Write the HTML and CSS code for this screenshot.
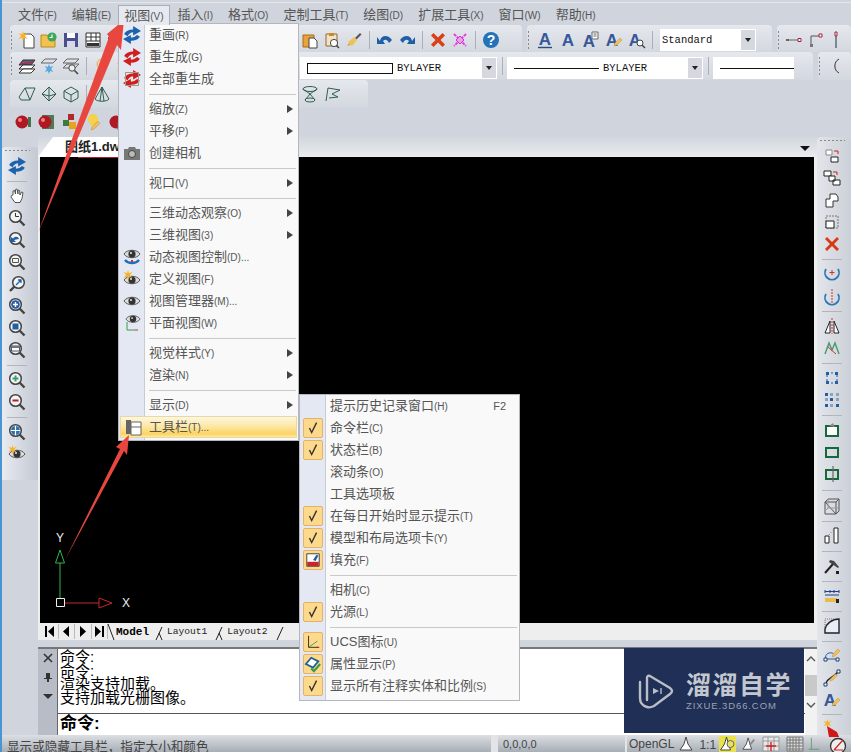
FILE: index.html
```html
<!DOCTYPE html>
<html lang="zh-CN">
<head>
  <meta charset="UTF-8">
  <title>图纸1.dwg</title>
  <link rel="stylesheet" href="styles.css">
</head>
<body>
  <svg class="defs" width="0" height="0">
    <symbol id="regen" viewBox="0 0 16 16">
      <path d="M1 7Q3 3 9 3V0l7 4.500L9 8.500v-3Q6 5.500 4 9Z"/>
      <path d="M15 9.500Q13 13 7 13v3L0 11.500 7 8v2.500q3 0 5.500-2.500Z"/>
    </symbol>
    <symbol id="mag" viewBox="0 0 18 18">
      <line x1="11" y1="11" x2="16.5" y2="16.5" stroke="#444" stroke-width="2.4"/>
      <circle cx="7.5" cy="7.5" r="5.8" fill="#f4f4f4" stroke="#444" stroke-width="1.5"/>
    </symbol>
    <symbol id="eye" viewBox="0 0 18 18">
      <path d="M1 9C4 4 14 4 17 9 14 14 4 14 1 9Z" fill="#ddd" stroke="#555"/>
      <circle cx="9" cy="9" r="3.6" fill="#333"/>
      <circle cx="8" cy="8" r="1" fill="#eee"/>
    </symbol>
    <symbol id="check" viewBox="0 0 18 18">
      <path d="M5 9l2.5 5L13 3" fill="none" stroke="#333" stroke-width="1.6"/>
    </symbol>
    <symbol id="star" viewBox="0 0 10 10">
      <path d="M5 0l1 3.2L9.5 2 7 5l2.5 3L6 6.8 5 10 4 6.8.5 8 3 5 .5 2 4 3.2Z" fill="#f5b32c"/>
    </symbol>
    <symbol id="pencil" viewBox="0 0 10 10">
      <path d="M1 9l1-3 5-5 2 2-5 5Z" fill="#f0c060" stroke="#c89030" stroke-width=".5"/>
    </symbol>
  </svg>

  <div class="app">
    <nav class="menubar">
      <span class="menubar-item">文件<small>(F)</small></span>
      <span class="menubar-item">编辑<small>(E)</small></span>
      <span class="menubar-item open">视图<small>(V)</small></span>
      <span class="menubar-item">插入<small>(I)</small></span>
      <span class="menubar-item">格式<small>(O)</small></span>
      <span class="menubar-item">定制工具<small>(T)</small></span>
      <span class="menubar-item">绘图<small>(D)</small></span>
      <span class="menubar-item">扩展工具<small>(X)</small></span>
      <span class="menubar-item">窗口<small>(W)</small></span>
      <span class="menubar-item">帮助<small>(H)</small></span>
    </nav>

    <div class="toolbars">
      <div class="tb-row">
        <div class="toolbar tb-main">
          <i class="grip"></i>
          <span class="btn"><svg class="ic" viewBox="0 0 18 18"><path d="M6 3h7l3 3v11H6Z" fill="#fff" stroke="#444"/><use href="#star" x="0" y="0" width="10" height="10"/></svg></span>
          <span class="btn"><svg class="ic" viewBox="0 0 18 18"><path d="M1 16V4h6l2 2h6v10Z" fill="#f2c14e" stroke="#b98a20"/><circle cx="12" cy="6" r="4.6" fill="#3fa65a"/><path d="M12 3.5V6.5H9.5" fill="none" stroke="#fff" stroke-width="1.2"/></svg></span>
          <span class="btn"><svg class="ic" viewBox="0 0 18 18"><path d="M2 2h14v14H2Z" fill="#4c4f8d"/><path d="M5 2h8v5H5Z" fill="#fff"/><path d="M5 10h8v6H5Z" fill="#d8d8e8"/></svg></span>
          <span class="btn"><svg class="ic" viewBox="0 0 18 18"><path d="M2 2h14v14H2Z" fill="#fff" stroke="#333"/><path d="M2 6h14M2 10h14M7 2v8M12 2v8" stroke="#333"/><path d="M3 12h12v3H3Z" fill="#333"/></svg></span>
          <span class="btn"><svg class="ic" viewBox="0 0 18 18"><path d="M2 6h6v10H2Z" fill="#555"/></svg></span>
          <i class="skip skip-main"></i>
          <span class="btn"><svg class="ic" viewBox="0 0 18 18"><path d="M2 4h11v12H2Z" fill="#e9a23c" stroke="#a86c14"/><path d="M8 7h5l3 3v7H8Z" fill="#fff" stroke="#444"/></svg></span>
          <span class="btn"><svg class="ic" viewBox="0 0 18 18"><path d="M3 3h11v12H3Z" fill="#f4e3c2" stroke="#8a6a38"/><path d="M6 2h5v3H6Z" fill="#c98a2e"/><circle cx="11" cy="12" r="3.6" fill="#fff" stroke="#444"/><path d="M13.5 14.5 16 17" stroke="#444" stroke-width="1.4"/></svg></span>
          <span class="btn"><svg class="ic" viewBox="0 0 18 18"><path d="M10 7l5-5 1.5 1.5-5 5Z" fill="#555"/><path d="M3 11l6-5 3 3-5 6Z" fill="#eec25a"/><path d="M2 15l4-1-2-2Z" fill="#d9a83a"/></svg></span>
          <i class="sep"></i>
          <span class="btn"><svg class="ic" viewBox="0 0 18 18"><path d="M4 10C5 4 12 3 16 9l-3 3C11 8 9 8 7 10l2 3H1V6Z" fill="#1e5fa8"/></svg></span>
          <span class="btn"><svg class="ic" viewBox="0 0 18 18"><path d="M14 10C13 4 6 3 2 9l3 3C7 8 9 8 11 10l-2 3h8V6Z" fill="#1e5fa8"/></svg></span>
          <i class="sep"></i>
          <span class="btn"><svg class="ic" viewBox="0 0 18 18"><path d="M2 4.500 4.500 2 9 6.500 13.500 2 16 4.500 11.500 9l4.500 4.500-2.500 2.500L9 11.500 4.500 16 2 13.500 6.500 9Z" fill="#da3f16"/></svg></span>
          <span class="btn"><svg class="ic" viewBox="0 0 18 18"><path d="M3 3l12 12M15 3 3 15" stroke="#e040e0" stroke-width="2" stroke-dasharray="3 1"/><path d="M5 9l4-4 4 4-4 4Z" fill="#e9a0e9" stroke="#d030d0"/></svg></span>
          <i class="sep"></i>
          <span class="btn"><svg class="ic" viewBox="0 0 18 18"><circle cx="9" cy="9" r="8" fill="#2472b8"/><text x="9" y="14" class="ic-help">?</text></svg></span>
        </div>
        <div class="toolbar tb-text">
          <i class="grip"></i>
          <span class="btn wide"><svg class="ic" viewBox="0 0 18 18"><text x="9" y="14" class="ic-a">A</text><path d="M2 16.500h14" stroke="#2b4a88" stroke-width="1.400"/></svg></span>
          <span class="btn wide"><svg class="ic" viewBox="0 0 18 18"><text x="9" y="15" class="ic-a">A</text></svg></span>
          <span class="btn wide"><svg class="ic" viewBox="0 0 18 18"><text x="7" y="16" class="ic-a">A</text><path d="M10 1h6v7h-6Z" fill="#fff" stroke="#666"/><path d="M11.500 3h3M11.500 5h3" stroke="#666"/></svg></span>
          <span class="btn wide"><svg class="ic" viewBox="0 0 18 18"><text x="7" y="15" class="ic-a">A</text><use href="#pencil" x="8" y="6" width="10" height="10"/></svg></span>
          <span class="btn wide"><svg class="ic" viewBox="0 0 18 18"><text x="7" y="15" class="ic-a">A</text><circle cx="12" cy="12" r="3" fill="#fff" stroke="#444"/><path d="M14 14l3 3" stroke="#444" stroke-width="1.400"/></svg></span>
          <i class="sep"></i>
          <div class="combo combo-style"><span class="combo-val">Standard</span><span class="combo-btn"></span></div>
        </div>
        <div class="toolbar tb-dim">
          <i class="grip"></i>
          <span class="btn"><svg class="ic" viewBox="0 0 18 18"><path d="M1 9h12" stroke="#666"/><path d="M1 8h3v2H1Z" fill="#666"/><path d="M13 7.500h3v3h-3Z" fill="#fff" stroke="#a02040"/></svg></span>
          <span class="btn"><svg class="ic" viewBox="0 0 18 18"><path d="M4 15V5h9" fill="none" stroke="#555"/><path d="M3 13h3v3H3Z" fill="#777"/><path d="M12 3h3v3h-3Z" fill="#fff" stroke="#a02040"/></svg></span>
          <span class="btn narrow"><svg class="ic" viewBox="0 0 18 18"><path d="M9 4v13" stroke="#234"/><path d="M8 1h2v4H8Z" fill="#fff" stroke="#a02040"/></svg></span>
        </div>
      </div>

      <div class="tb-row">
        <div class="toolbar tb-layer">
          <i class="grip"></i>
          <span class="btn"><svg class="ic" viewBox="0 0 18 18"><path d="M5 3h12l-4 5H1Z" fill="#59608a" stroke="#333"/><path d="M5 8h12l-4 4H1Z" fill="#fff" stroke="#333"/><path d="M5 12h12l-4 4H1Z" fill="#fff" stroke="#333"/><path d="M2 7l14-2" stroke="#c22" stroke-width="1"/></svg></span>
          <span class="btn"><svg class="ic" viewBox="0 0 18 18"><path d="M5 2h12l-4 4H1Z" fill="none" stroke="#666"/><path d="M9 7l1.200 3 3-1-2 3 2 3-3-1L9 17l-1.200-3-3 1 2-3-2-3 3 1Z" fill="#5aa8e0"/></svg></span>
          <span class="btn"><svg class="ic" viewBox="0 0 18 18"><path d="M5 2h12l-4 4H1ZM5 7h12l-4 4H1Z" fill="none" stroke="#666"/><circle cx="10" cy="11" r="3.200" fill="#eee" stroke="#444"/><path d="M12.500 13.500 16 17" stroke="#444" stroke-width="1.600"/></svg></span>
          <i class="sep"></i>
          <span class="btn"><svg class="ic" viewBox="0 0 18 18"><path d="M9 2a5 5 0 0 1 3 9v3H6v-3A5 5 0 0 1 9 2Z" fill="#f6d9a6" stroke="#d9b070"/></svg></span>
          <span class="btn"><svg class="ic" viewBox="0 0 18 18"><use href="#star" x="1" y="3" width="14" height="14"/></svg></span>
          <i class="skip skip-layer"></i>
          <div class="combo combo-color"><i class="swatch"></i><span class="combo-val">BYLAYER</span><span class="combo-btn"></span></div>
          <i class="sep tight"></i>
          <div class="combo combo-line"><i class="dash"></i><span class="combo-val">BYLAYER</span><span class="combo-btn"></span></div>
          <i class="sep tight"></i>
          <div class="combo combo-weight"><i class="dash"></i></div>
        </div>
        <div class="toolbar tb-arc">
          <i class="grip"></i>
          <svg class="ic" viewBox="0 0 18 18"><path d="M15 2A8 8 0 0 0 15 16" fill="none" stroke="#333"/></svg>
        </div>
      </div>

      <div class="tb-row">
        <div class="toolbar tb-solid">
          <i class="grip none"></i>
          <span class="btn"><svg class="ic s3" viewBox="0 0 18 18"><path d="M1 12 7 3h10l-5 12H3Z"/><path d="M7 3l5 12"/></svg></span>
          <span class="btn"><svg class="ic s3" viewBox="0 0 18 18"><path d="M9 2l7 7-7 7-7-7Z"/><path d="M9 2v14M2 9l7 2 7-2"/></svg></span>
          <span class="btn"><svg class="ic s3" viewBox="0 0 18 18"><path d="M9 2l7 4v7l-7 4-7-4V6Z"/><path d="M2 6l7 4 7-4M9 10v7"/></svg></span>
          <i class="sep"></i>
          <span class="btn"><svg class="ic s3" viewBox="0 0 18 18"><path d="M9 2 2 14c2 3 12 3 14 0Z"/><path d="M9 2 7 16M9 2l2 14"/></svg></span>
          <i class="skip skip-solid"></i>
          <i class="sep"></i>
          <span class="btn"><svg class="ic s3" viewBox="0 0 18 18"><ellipse cx="9" cy="4" rx="7" ry="2.500"/><ellipse cx="9" cy="15" rx="5" ry="2"/><path d="M2 4l7 5 7-5M4 15l5-6 5 6"/></svg></span>
          <span class="btn"><svg class="ic s3" viewBox="0 0 18 18"><path d="M3 16 5 3l12 2-8 4 6 3-9 1"/></svg></span>
        </div>
      </div>

      <div class="tb-row">
        <div class="toolbar tb-render">
          <span class="btn"><svg class="ic" viewBox="0 0 18 18"><circle cx="8" cy="9" r="6.500" fill="#b01824"/><circle cx="6" cy="7" r="2" fill="#f08080"/><path d="M14 4h3v10h-3Z" fill="#44704a"/></svg></span>
          <span class="btn"><svg class="ic" viewBox="0 0 18 18"><path d="M5 2h12v14H5Z" fill="#4f7a55"/><circle cx="8" cy="9" r="6.500" fill="#b01824"/><circle cx="6" cy="7" r="2" fill="#f08080"/></svg></span>
          <span class="btn"><svg class="ic" viewBox="0 0 18 18"><path d="M7 1h6v6H7Z" fill="#b3262c"/><path d="M2 7h6v6H2Z" fill="#3d7a3f"/><path d="M8 9h7v7H8Z" fill="#e8a21e"/></svg></span>
          <span class="btn"><svg class="ic" viewBox="0 0 18 18"><path d="M9 1a5 5 0 0 1 3 9v2H6v-2A5 5 0 0 1 9 1Z" fill="#f4d24c"/><use href="#pencil" x="6" y="7" width="11" height="11"/></svg></span>
          <span class="btn"><svg class="ic" viewBox="0 0 18 18"><circle cx="8" cy="9" r="6.500" fill="#b01824"/><path d="M10 9h7v8h-7Z" fill="#fff" stroke="#666"/></svg></span>
        </div>
      </div>
    </div>

    <div class="work">
      <aside class="side side-left">
        <i class="grip-h"></i>
        <span class="sbtn"><svg class="ic blue"><use href="#regen"/></svg></span>
        <i class="hsep"></i>
        <span class="sbtn"><svg class="ic" viewBox="0 0 18 18"><path d="M5 8V4l1.500-.5L7.500 7V2.500L9 2l1 5V3l1.500.5L12 8l1.500-3 1.500.5-1 6-2 4H7L3 10l.5-1.500Z" fill="#fff" stroke="#555"/></svg></span>
        <span class="sbtn"><svg class="ic"><use href="#mag"/></svg><svg class="ic over" viewBox="0 0 18 18"><path d="M7.500 4v3.500H11" fill="none" stroke="#333"/></svg></span>
        <span class="sbtn"><svg class="ic"><use href="#mag"/></svg><svg class="ic over" viewBox="0 0 18 18"><path d="M2 11l1-5 2 1.500C7 5 10 5 11 8L8 8.500 6 9l2 2Z" fill="#1e5fa8"/></svg></span>
        <span class="sbtn"><svg class="ic"><use href="#mag"/></svg><svg class="ic over" viewBox="0 0 18 18"><path d="M4.500 5.500h6v4h-6Z" fill="none" stroke="#555"/></svg></span>
        <span class="sbtn"><svg class="ic" viewBox="0 0 18 18"><path d="M2 16l5-5" stroke="#444" stroke-width="2.400"/><circle cx="10.500" cy="7.500" r="5.800" fill="#f4f4f4" stroke="#444" stroke-width="1.500"/><path d="M8 10l5-5M10 5h3v3" fill="none" stroke="#1e5fa8" stroke-width="1.300"/></svg></span>
        <span class="sbtn"><svg class="ic"><use href="#mag"/></svg><svg class="ic over" viewBox="0 0 18 18"><circle cx="7.500" cy="7.500" r="4.300" fill="#1e5fa8"/><path d="M7.500 5v5M5 7.500h5" stroke="#fff" stroke-width="1.400"/></svg></span>
        <span class="sbtn"><svg class="ic"><use href="#mag"/></svg><svg class="ic over" viewBox="0 0 18 18"><path d="M4.500 4.500h6v6h-6Z" fill="#1e5fa8"/></svg></span>
        <span class="sbtn"><svg class="ic"><use href="#mag"/></svg><svg class="ic over" viewBox="0 0 18 18"><path d="M3.500 5h8v5h-8Z" fill="#fff" stroke="#555"/><path d="M3.500 5h8v2h-8Z" fill="#67788f"/></svg></span>
        <i class="hsep"></i>
        <span class="sbtn"><svg class="ic"><use href="#mag"/></svg><svg class="ic over" viewBox="0 0 18 18"><path d="M7.500 4.500v6M4.500 7.500h6" stroke="#3aa07a" stroke-width="2"/></svg></span>
        <span class="sbtn"><svg class="ic"><use href="#mag"/></svg><svg class="ic over" viewBox="0 0 18 18"><path d="M4.500 7.500h6" stroke="#b02030" stroke-width="2"/></svg></span>
        <i class="hsep"></i>
        <span class="sbtn"><svg class="ic"><use href="#mag"/></svg><svg class="ic over" viewBox="0 0 18 18"><circle cx="7.500" cy="7.500" r="4.500" fill="#2a70b0"/><path d="M7.500 3v9M3 7.500h9" stroke="#fff" stroke-width="1.200"/></svg></span>
        <span class="sbtn"><svg class="ic"><use href="#eye"/></svg><svg class="ic over" viewBox="0 0 18 18"><use href="#star" x="0" y="0" width="9" height="9"/></svg></span>
      </aside>

      <main class="center">
        <div class="doc">
          <div class="tabbar">
            <div class="doc-tab">图纸1.dwg</div>
            <i class="tab-menu"></i>
          </div>
          <div class="canvas">
            <svg class="axes" width="95" height="80" viewBox="0 0 95 80">
              <text x="20" y="13" class="axis-label">Y</text>
              <path d="M20 69V34" stroke="#2fb84a"/>
              <path d="M20 21l4.500 13h-9Z" fill="none" stroke="#2fb84a"/>
              <path d="M25 74h34" stroke="#c32a2a"/>
              <path d="M59 69l13 5-13 5Z" fill="none" stroke="#c32a2a"/>
              <path d="M16.500 69.500h8v8h-8Z" fill="none" stroke="#eee"/>
              <text x="86" y="78" class="axis-label">X</text>
            </svg>
          </div>
          <div class="layouts">
            <span class="nav"><svg viewBox="0 0 9 11"><path d="M0 0h2v11H0ZM9 0v11L3 5.500Z"/></svg></span>
            <span class="nav"><svg viewBox="0 0 9 11"><path d="M7 0v11L1 5.500Z"/></svg></span>
            <span class="nav"><svg viewBox="0 0 9 11"><path d="M2 0v11l6-5.500Z"/></svg></span>
            <span class="nav"><svg viewBox="0 0 9 11"><path d="M7 0h2v11H7ZM0 0v11l6-5.500Z"/></svg></span>
            <svg class="slash" viewBox="0 0 8 16"><path d="M1 0l6 16"/></svg>
            <span class="ltab active">Model</span>
            <svg class="slash" viewBox="0 0 8 16"><path d="M7 3 1 16M4 9l3 7"/></svg>
            <span class="ltab">Layout1</span>
            <svg class="slash" viewBox="0 0 8 16"><path d="M7 3 1 16M4 9l3 7"/></svg>
            <span class="ltab">Layout2</span>
            <svg class="slash" viewBox="0 0 8 16"><path d="M7 3 1 16"/></svg>
          </div>
        </div>

        <section class="command">
          <div class="cmd-strip">
            <svg viewBox="0 0 10 10"><path d="M1 1l8 8M9 1 1 9" stroke="#333" stroke-width="1.600"/></svg>
            <svg viewBox="0 0 10 10"><path d="M3 1h4v5h2v1H6v3H4V7H1V6h2Z" fill="#333"/></svg>
            <svg viewBox="0 0 10 10"><path d="M0 3h10L5 8Z" fill="#333"/></svg>
          </div>
          <div class="cmd-body">
            <div class="cmd-log">
              <div>命令:</div>
              <div>命令:</div>
              <div>渲染支持加载。</div>
              <div>支持加载光栅图像。</div>
            </div>
            <div class="cmd-input">命令:</div>
          </div>
          <div class="cmd-scroll">
            <svg viewBox="0 0 10 6"><path d="M1 5l4-4 4 4" fill="none" stroke="#555" stroke-width="1.400"/></svg>
            <i class="thumb"></i>
            <svg viewBox="0 0 10 6"><path d="M1 1l4 4 4-4" fill="none" stroke="#555" stroke-width="1.400"/></svg>
          </div>
          <div class="watermark">
            <svg class="wm-logo" viewBox="0 0 36 36">
              <path d="M9 27V5Q9 2 12 3L32 15Q36 18 32 21L16 33Q12 35 9 34 2 32 2 25V9" fill="none" stroke="#b9bdc7" stroke-width="2.400" stroke-linecap="round"/>
              <path d="M15 15l6 3-6 3Z" fill="#b9bdc7"/>
              <path d="M23 15v6" stroke="#b9bdc7" stroke-width="1.400"/>
            </svg>
            <div class="wm-text">
              <div class="wm-name">溜溜自学</div>
              <div class="wm-url">ZIXUE.3D66.COM</div>
            </div>
          </div>
        </section>
      </main>

      <aside class="side side-right">
        <i class="grip-h"></i>
        <span class="sbtn"><svg class="ic" viewBox="0 0 18 18"><path d="M3 3h6v5H3Z" fill="#fff" stroke="#888"/><path d="M8 10h7v5H8Z" fill="#fff" stroke="#222"/><path d="M11 4h4v3" fill="none" stroke="#c22"/></svg></span>
        <span class="sbtn"><svg class="ic" viewBox="0 0 18 18"><path d="M1 2h7v5H1Z" fill="#fff" stroke="#222"/><path d="M6 7h6v5H6ZM10 11h7v5h-7Z" fill="#fff" stroke="#222"/><path d="M10 3h4v3" fill="none" stroke="#c22"/></svg></span>
        <span class="sbtn"><svg class="ic" viewBox="0 0 18 18"><path d="M3 16V8h4V3h6l2 3v4h-5v6Z" fill="#fff" stroke="#333"/></svg></span>
        <span class="sbtn"><svg class="ic" viewBox="0 0 18 18"><path d="M3 3h12v12H3Z" fill="none" stroke="#777" stroke-dasharray="2 1"/><path d="M3 8h8v7H3Z" fill="#fff" stroke="#222"/></svg></span>
        <span class="sbtn"><svg class="ic" viewBox="0 0 18 18"><path d="M2 4l2-2 5 5 5-5 2 2-5 5 5 5-2 2-5-5-5 5-2-2 5-5Z" fill="#d93a14"/></svg></span>
        <i class="hsep"></i>
        <span class="sbtn"><svg class="ic" viewBox="0 0 18 18"><path d="M3 4a7 7 0 1 0 12 0" fill="none" stroke="#2a78b0" stroke-width="1.800"/><path d="M9 5v5M6.500 7.500h5" stroke="#c33"/></svg></span>
        <span class="sbtn"><svg class="ic" viewBox="0 0 18 18"><path d="M3 7a7 7 0 1 0 12 0" fill="none" stroke="#2a78b0" stroke-width="1.800"/><path d="M9 2v14" stroke="#c33" stroke-dasharray="2 1"/></svg></span>
        <i class="hsep"></i>
        <span class="sbtn"><svg class="ic" viewBox="0 0 18 18"><path d="M7 4v12H2ZM11 4v12h5Z" fill="#fff" stroke="#222"/><path d="M9 1v16" stroke="#c33" stroke-dasharray="2 1"/></svg></span>
        <span class="sbtn"><svg class="ic" viewBox="0 0 18 18"><path d="M2 15 6 4l3 7 3-7 4 11" fill="none" stroke="#4a9a6a" stroke-width="1.400"/><path d="M5 8l8 7" stroke="#c33"/></svg></span>
        <i class="hsep"></i>
        <span class="sbtn"><svg class="ic" viewBox="0 0 18 18"><path d="M4 4h10v10H4Z" fill="none" stroke="#1e5fa8" stroke-dasharray="2 2"/><path d="M3 3h3v3H3ZM12 3h3v3h-3ZM3 12h3v3H3ZM12 12h3v3h-3Z" fill="#1e5fa8"/></svg></span>
        <span class="sbtn"><svg class="ic" viewBox="0 0 18 18"><path d="M2 2h3v3H2ZM2 13h3v3H2ZM13 13h3v3h-3ZM7 7h3v3H7Z" fill="#1e5fa8"/><path d="M7 2h3v3H7ZM13 2h3v3h-3ZM2 7h3v3H2ZM13 7h3v3h-3ZM7 13h3v3H7Z" fill="#8da2bc"/></svg></span>
        <i class="hsep"></i>
        <span class="sbtn"><svg class="ic" viewBox="0 0 18 18"><path d="M3 5h12v10H3Z" fill="#fff" stroke="#17693a" stroke-width="2"/><path d="M6 5l4-3 2 4Z" fill="#888"/></svg></span>
        <span class="sbtn"><svg class="ic" viewBox="0 0 18 18"><path d="M3 5h12v9H3Z" fill="none" stroke="#17693a" stroke-width="2"/></svg></span>
        <span class="sbtn"><svg class="ic" viewBox="0 0 18 18"><path d="M3 5h12v9H3Z" fill="none" stroke="#17693a" stroke-width="2"/><path d="M10 1v16" stroke="#666" stroke-width="1.200"/></svg></span>
        <i class="hsep wider"></i>
        <span class="sbtn"><svg class="ic" viewBox="0 0 18 18"><path d="M2 5h11v12H2ZM2 5l3-3h11v12l-3 3ZM13 5l3-3" fill="none" stroke="#555"/><path d="M2 14l3-3h11M5 2v9" fill="none" stroke="#999"/></svg></span>
        <i class="hsep"></i>
        <span class="sbtn"><svg class="ic" viewBox="0 0 18 18"><path d="M2 9h4v7H2ZM11 1h4v15h-4Z" fill="#fff" stroke="#222"/><path d="M6 8l5-6" stroke="#777" stroke-dasharray="1 2"/></svg></span>
        <i class="hsep"></i>
        <span class="sbtn"><svg class="ic" viewBox="0 0 18 18"><path d="M2 16l8-9" stroke="#222" stroke-width="2"/><path d="M7 3l4 1 5 6-1 1-6-4-3-2Z" fill="#444"/><path d="M13 14h3v3h-3Z" fill="#222"/></svg></span>
        <i class="hsep"></i>
        <span class="sbtn"><svg class="ic" viewBox="0 0 18 18"><path d="M2 3v3M7 3v3M11 3v3M16 3v3M2 4.500h14" stroke="#1e3f8a"/><path d="M2 8h14" stroke="#1e3f8a"/><path d="M2 11h12v4H2Z" fill="#e8bc4c"/><path d="M13 12h3v4h-3Z" fill="#222"/></svg></span>
        <i class="hsep"></i>
        <span class="sbtn"><svg class="ic" viewBox="0 0 18 18"><path d="M2 16V12C3 7 9 2 16 2v14Z" fill="#e7eef8" stroke="#222" stroke-width="1.400"/><path d="M2 10V2h10" fill="none" stroke="#777" stroke-dasharray="1 1"/></svg></span>
        <i class="hsep"></i>
        <span class="sbtn"><svg class="ic" viewBox="0 0 18 18"><path d="M3 12C1 7 7 4 11 7" fill="none" stroke="#1e5fa8"/><path d="M3 12h11" stroke="#1e5fa8"/><path d="M1 11h3v3H1ZM13 11h3v3h-3Z" fill="#fff" stroke="#1e3f6a"/><use href="#pencil" x="8" y="1" width="10" height="10"/></svg></span>
        <span class="sbtn"><svg class="ic" viewBox="0 0 18 18"><path d="M3 16C3 9 9 10 15 3" fill="none" stroke="#222" stroke-width="1.400"/><path d="M1 14h3v3H1ZM14 1h3v3h-3Z" fill="#fff" stroke="#1e3f6a"/><use href="#pencil" x="6" y="4" width="9" height="9"/></svg></span>
        <span class="sbtn"><svg class="ic" viewBox="0 0 18 18"><text x="7" y="15" class="ic-a">A</text><use href="#pencil" x="8" y="6" width="10" height="10"/></svg></span>
        <i class="hsep short"></i>
        <span class="sbtn"><svg class="ic" viewBox="0 0 18 18"><use href="#star" x="0" y="0" width="9" height="9"/><path d="M4 7l10 6 2 5H6Z" fill="#d01818"/></svg></span>
      </aside>
    </div>

    <footer class="status">
      <span class="status-msg">显示或隐藏工具栏，指定大小和颜色</span>
      <i class="status-sep sep-coords"></i>
      <span class="status-coords">0,0,0,0</span>
      <i class="status-sep sep-gl"></i>
      <span class="status-gl">OpenGL</span>
      <svg class="st-ic" viewBox="0 0 14 16"><path d="M7 1 5 8 1 14h12L9 8Z" fill="#fff" stroke="#444"/></svg>
      <span class="status-scale">1:1</span>
      <svg class="st-ic lit" viewBox="0 0 16 16"><path d="M7 1 5 8 1 14h10L9 8Z" fill="#fff" stroke="#444"/><circle cx="11" cy="8" r="3.500" fill="#e8e060" stroke="#666"/></svg>
      <svg class="st-ic" viewBox="0 0 16 16"><path d="M7 1 5 8 1 14h10L9 8Z" fill="#fff" stroke="#444"/><path d="M9 9l5-6" stroke="#888" stroke-width="2"/></svg>
      <svg class="st-ic grid" viewBox="0 0 18 16"><path d="M1 1h16v14H1ZM1 5h16M1 10h16M6 1v14M12 1v14" fill="#e8e8e8" stroke="#999"/><path d="M9 6v9M4 10h10" stroke="#c22" stroke-width="1.400"/></svg>
      <svg class="st-ic grid" viewBox="0 0 18 16"><path d="M1 1h16v14H1ZM1 4h16M1 7h16M1 10h16M1 13h16M4 1v14M7 1v14M10 1v14M13 1v14" fill="#ddd" stroke="#777"/></svg>
      <svg class="st-ic ortho" viewBox="0 0 16 16"><path d="M5 1v13h9M5 14h-3" fill="none" stroke="#5a9a6a"/></svg>
      <svg class="st-ic clock" viewBox="0 0 18 18"><circle cx="9" cy="10" r="7.500" fill="#eee" stroke="#333" stroke-width="1.300"/><path d="M5 14 14 4M5 14h9" stroke="#c22" stroke-width="1.200" fill="none"/></svg>
    </footer>

    <div class="menu menu-view">
      <div class="mi"><span class="mi-ic"><svg class="ic blue"><use href="#regen"/></svg></span><span class="mi-tx">重画<small>(R)</small></span></div>
      <div class="mi"><span class="mi-ic"><svg class="ic red"><use href="#regen"/></svg></span><span class="mi-tx">重生成<small>(G)</small></span></div>
      <div class="mi"><span class="mi-ic"><svg class="ic red boxed"><use href="#regen"/></svg></span><span class="mi-tx">全部重生成</span></div>
      <div class="msep"></div>
      <div class="mi"><span class="mi-ic"></span><span class="mi-tx">缩放<small>(Z)</small></span><i class="mi-arrow"></i></div>
      <div class="mi"><span class="mi-ic"></span><span class="mi-tx">平移<small>(P)</small></span><i class="mi-arrow"></i></div>
      <div class="mi"><span class="mi-ic"><svg class="ic" viewBox="0 0 18 18"><path d="M1 5h4l1-2h6l1 2h4v11H1Z" fill="#777"/><circle cx="9" cy="10" r="3.500" fill="#bbb" stroke="#444"/></svg></span><span class="mi-tx">创建相机</span></div>
      <div class="msep"></div>
      <div class="mi"><span class="mi-ic"></span><span class="mi-tx">视口<small>(V)</small></span><i class="mi-arrow"></i></div>
      <div class="msep"></div>
      <div class="mi"><span class="mi-ic"></span><span class="mi-tx">三维动态观察<small>(O)</small></span><i class="mi-arrow"></i></div>
      <div class="mi"><span class="mi-ic"></span><span class="mi-tx">三维视图<small>(3)</small></span><i class="mi-arrow"></i></div>
      <div class="mi"><span class="mi-ic"><svg class="ic" viewBox="0 0 18 18"><use href="#eye" y="-3" width="18" height="18"/><path d="M2 12c3 4 11 4 14 0" fill="none" stroke="#1e6fb8" stroke-width="2.400"/><path d="M8 13h2" stroke="#c33" stroke-width="2"/></svg></span><span class="mi-tx">动态视图控制<small>(D)...</small></span></div>
      <div class="mi"><span class="mi-ic"><svg class="ic" viewBox="0 0 18 18"><use href="#eye" y="1" width="18" height="18"/><use href="#star" width="10" height="10"/></svg></span><span class="mi-tx">定义视图<small>(F)</small></span></div>
      <div class="mi"><span class="mi-ic"><svg class="ic"><use href="#eye"/></svg></span><span class="mi-tx">视图管理器<small>(M)...</small></span></div>
      <div class="mi"><span class="mi-ic"><svg class="ic" viewBox="0 0 18 18"><use href="#eye" x="2" y="-3" width="16" height="16"/><path d="M4 8v8h8" fill="none" stroke="#3a9a4a"/><path d="M12 16h3" stroke="#c33"/></svg></span><span class="mi-tx">平面视图<small>(W)</small></span></div>
      <div class="msep"></div>
      <div class="mi"><span class="mi-ic"></span><span class="mi-tx">视觉样式<small>(Y)</small></span><i class="mi-arrow"></i></div>
      <div class="mi"><span class="mi-ic"></span><span class="mi-tx">渲染<small>(N)</small></span><i class="mi-arrow"></i></div>
      <div class="msep"></div>
      <div class="mi"><span class="mi-ic"></span><span class="mi-tx">显示<small>(D)</small></span><i class="mi-arrow"></i></div>
      <div class="mi hot"><span class="mi-ic"><svg class="ic" viewBox="0 0 18 18"><path d="M2 2h5v14H2Z" fill="#666"/><path d="M7 4h10v13H7Z" fill="#fff" stroke="#666"/><path d="M7 9h10" stroke="#666"/></svg></span><span class="mi-tx">工具栏<small>(T)...</small></span></div>
    </div>

    <div class="menu menu-toolbars">
      <div class="mi"><span class="mi-ic"></span><span class="mi-tx">提示历史记录窗口<small>(H)</small></span><span class="mi-key">F2</span></div>
      <div class="mi"><span class="mi-ic"><span class="chk"><svg class="ic"><use href="#check"/></svg></span></span><span class="mi-tx">命令栏<small>(C)</small></span></div>
      <div class="mi"><span class="mi-ic"><span class="chk"><svg class="ic"><use href="#check"/></svg></span></span><span class="mi-tx">状态栏<small>(B)</small></span></div>
      <div class="mi"><span class="mi-ic"></span><span class="mi-tx">滚动条<small>(O)</small></span></div>
      <div class="mi"><span class="mi-ic"></span><span class="mi-tx">工具选项板</span></div>
      <div class="mi"><span class="mi-ic"><span class="chk"><svg class="ic"><use href="#check"/></svg></span></span><span class="mi-tx">在每日开始时显示提示<small>(T)</small></span></div>
      <div class="mi"><span class="mi-ic"><span class="chk"><svg class="ic"><use href="#check"/></svg></span></span><span class="mi-tx">模型和布局选项卡<small>(Y)</small></span></div>
      <div class="mi"><span class="mi-ic"><span class="chk"><svg class="ic" viewBox="0 0 18 18"><path d="M2 2h14v14H2Z" fill="#fff" stroke="#333"/><path d="M2.500 11h13v5h-13Z" fill="#c8262a"/><path d="M9 9l4-6 2 1-3 6Z" fill="#1e5fa8"/></svg></span></span><span class="mi-tx">填充<small>(F)</small></span></div>
      <div class="msep"></div>
      <div class="mi"><span class="mi-ic"></span><span class="mi-tx">相机<small>(C)</small></span></div>
      <div class="mi"><span class="mi-ic"><span class="chk"><svg class="ic"><use href="#check"/></svg></span></span><span class="mi-tx">光源<small>(L)</small></span></div>
      <div class="msep"></div>
      <div class="mi"><span class="mi-ic"><span class="chk"><svg class="ic" viewBox="0 0 18 18"><path d="M4 2v13h12" fill="none" stroke="#222"/><path d="M4 15 14 8" stroke="#3aa04a"/><path d="M13 14l3 1-3 1Z" fill="#c22"/></svg></span></span><span class="mi-tx">UCS图标<small>(U)</small></span></div>
      <div class="mi"><span class="mi-ic"><span class="chk"><svg class="ic" viewBox="0 0 18 18"><path d="M1 9l6-7 8 4-6 7Z" fill="#fff" stroke="#1e5f98" stroke-width="2"/><path d="M7 14l3 3 7-8" fill="none" stroke="#3a9a4a" stroke-width="2.400"/></svg></span></span><span class="mi-tx">属性显示<small>(P)</small></span></div>
      <div class="mi"><span class="mi-ic"><span class="chk"><svg class="ic"><use href="#check"/></svg></span></span><span class="mi-tx">显示所有注释实体和比例<small>(S)</small></span></div>
    </div>

    <svg class="arrows" width="851" height="752" viewBox="0 0 851 752">
      <path d="M38 233 109 37 107 34 124 20 121 50 117 45Z" fill="#e8473f"/>
      <path d="M65 560 120 449 116 447 129 435 127 455 124 451Z" fill="#e8473f"/>
    </svg>
  </div>
</body>
</html>
```
FILE: styles.css
```css
* {
  margin: 0;
  padding: 0;
  box-sizing: border-box;
}

html, body {
  width: 851px;
  height: 752px;
  overflow: hidden;
}

body {
  font-family: "Liberation Sans", "Noto Sans CJK SC", sans-serif;
  font-size: 13px;
  color: #555;
}

i {
  display: block;
  font-style: normal;
}

small {
  font-size: 10px;
}

.defs {
  position: absolute;
}

.app {
  position: relative;
  width: 851px;
  height: 752px;
  display: flex;
  flex-direction: column;
  background-color: #d0d4dc;
  border-left: 2px solid #4a94d2;
  overflow: hidden;
}

.ic {
  width: 18px;
  height: 18px;
  display: block;
  flex: none;
  overflow: visible;
}

.blue {
  fill: #1c62ac;
}

.red {
  fill: #cf1f1f;
}

.boxed {
  background-color: #e8e8e8;
  outline: 1px solid #9a9a9a;
  outline-offset: -3px;
}

.s3 {
  fill: none;
  stroke: #2f5f50;
  stroke-width: 1;
}

.ic-help {
  font: bold 14px "Liberation Sans", sans-serif;
  fill: #fff;
  text-anchor: middle;
}

.ic-a {
  font: bold 17px "Liberation Sans", sans-serif;
  fill: #36589a;
  text-anchor: middle;
}

/* menu bar */
.menubar {
  height: 25px;
  margin-top: 2px;
  flex: none;
  display: flex;
  align-items: center;
  gap: 1px;
  padding-left: 9px;
  border-top: 1px solid #e4e6ea;
  margin-bottom: -2px;
}

.menubar-item {
  height: 20px;
  line-height: 19px;
  padding: 0 7px;
  white-space: nowrap;
}

.menubar-item.open {
  background-color: #e6e9ef;
  border: 1px solid #a9aeb8;
  border-bottom: none;
  padding: 0 5px;
  margin-left: -1px;
  z-index: 1;
}

/* top toolbars */
.toolbars {
  flex: none;
  display: grid;
  grid-template-rows: 27px 28px 28px 27px;
}

.tb-row {
  display: flex;
  gap: 5px;
  margin-left: 8px;
}

.toolbar {
  display: flex;
  align-items: center;
  padding: 3px 0 1px;
  background: linear-gradient(#e5e8ed, #d3d7df);
  border-radius: 4px 4px 0 0;
}

.tb-main {
  width: 512px;
}

.tb-text {
  width: 245px;
}

.tb-dim {
  flex: 1;
}

.tb-layer {
  width: 803px;
  padding: 1px 0;
}

.tb-arc {
  flex: 1;
  padding: 1px 0;
}

.tb-solid {
  width: 358px;
  padding: 2px 0;
}

.tb-render {
  width: 124px;
  padding: 2px 0;
  background: none;
  margin-left: 1px;
}

.grip {
  width: 6px;
  height: 20px;
  flex: none;
  background-image: radial-gradient(circle, #888 0.7px, transparent 1px);
  background-size: 3px 4px;
  background-repeat: repeat-y;
}

.grip.none {
  background: none;
}

.btn {
  width: 22px;
  height: 22px;
  flex: none;
  display: flex;
  align-items: center;
  justify-content: center;
}

.btn.wide {
  width: 23px;
}

.btn.narrow {
  width: 18px;
}

.tb-render .btn {
  width: 23.5px;
}

.sep {
  width: 9px;
  height: 18px;
  flex: none;
  background: linear-gradient(#aab0ba, #aab0ba) center / 1px 100% no-repeat;
}

.sep.tight {
  width: 10px;
}

.skip {
  flex: none;
}

.skip-main {
  width: 173px;
}

.skip-layer {
  width: 165px;
}

.skip-solid {
  width: 177px;
}

.combo {
  height: 22px;
  flex: none;
  display: flex;
  align-items: center;
  background-color: #fff;
  font-family: "Liberation Mono", "DejaVu Sans Mono", monospace;
  font-size: 10.5px;
  color: #111;
  padding-left: 7px;
  margin-top: 4px;
}

.combo-style {
  width: 96px;
  padding-left: 2px;
  margin-top: 1px;
  margin-left: 3px;
}

.combo-color {
  width: 197px;
}

.combo-line {
  width: 196px;
}

.combo-weight {
  width: 81px;
}

.combo-val {
  flex: 1;
  white-space: nowrap;
}

.combo-color .combo-val, .combo-line .combo-val {
  padding-left: 4px;
}

.combo-btn {
  width: 16px;
  height: 22px;
  flex: none;
  border: 1px solid #fff;
  background: #d5d8de;
  position: relative;
}

.combo-btn::after {
  content: "";
  position: absolute;
  left: 4px;
  top: 8px;
  border-style: solid;
  border-width: 4px 3px 0;
  border-color: #222 transparent transparent;
}

.swatch {
  width: 86px;
  height: 11px;
  flex: none;
  border: 1px solid #111;
}

.dash {
  width: 85px;
  height: 1px;
  flex: none;
  background-color: #111;
}

.combo-weight .dash {
  width: 74px;
}

/* main area */
.work {
  flex: 1;
  min-height: 0;
  display: flex;
}

.side {
  flex: none;
  display: flex;
  flex-direction: column;
  align-items: center;
  border-radius: 4px 4px 0 0;
}

.side-left {
  width: 36px;
  height: 333px;
  margin-top: 12px;
  padding-right: 6px;
  background: linear-gradient(90deg, #e8ebf0, #c4c8d2);
}

.side-right {
  width: 34px;
  height: 600px;
  margin-top: 2px;
  padding-right: 4px;
  background: linear-gradient(90deg, #e2e5ea, #ccd0d8);
  overflow: hidden;
}

.grip-h {
  width: 26px;
  height: 8px;
  flex: none;
  background-image: radial-gradient(circle, #888 0.7px, transparent 1px);
  background-size: 4px 3px;
  background-repeat: repeat-x;
  background-position: 0 2px;
}

.sbtn {
  position: relative;
  width: 22px;
  height: 22px;
  flex: none;
  display: flex;
  align-items: center;
  justify-content: center;
}

.sbtn .over {
  position: absolute;
  left: 2px;
  top: 2px;
}

.hsep {
  width: 20px;
  height: 8px;
  flex: none;
  background: linear-gradient(#b0b5be, #b0b5be) center / 100% 1px no-repeat;
}

.hsep.wider {
  height: 10px;
}

.hsep.short {
  height: 6px;
}

.center {
  flex: 1;
  min-width: 0;
  display: flex;
  flex-direction: column;
}

.doc {
  height: 505px;
  flex: none;
  display: flex;
  flex-direction: column;
  background-color: #eee;
}

.tabbar {
  height: 22px;
  flex: none;
  display: flex;
  align-items: flex-end;
  justify-content: space-between;
  background: linear-gradient(#d0d4dc, #e9ebef);
  padding-right: 7px;
}

.doc-tab {
  width: 90px;
  height: 20px;
  padding-left: 27px;
  line-height: 20px;
  font-weight: bold;
  color: #222;
  background-color: #fff;
  clip-path: polygon(0 100%, 15px 0, 100% 0, 100% 100%);
  white-space: nowrap;
}

.tab-menu {
  width: 0;
  height: 0;
  margin-bottom: 6px;
  border-style: solid;
  border-width: 5px 5px 0;
  border-color: #111 transparent transparent;
}

.canvas {
  position: relative;
  flex: 1;
  background-color: #000;
  margin: 0 3px 0 2px;
}

/* red underline of the active tab */
.canvas::before {
  content: "";
  position: absolute;
  left: 38px;
  top: 0;
  width: 40px;
  height: 1px;
  background-color: #b02020;
}

.axes {
  position: absolute;
  left: 0;
  top: 372px;
}

.axis-label {
  font: 12px "Liberation Sans", sans-serif;
  fill: #eee;
  text-anchor: middle;
}

.layouts {
  height: 17px;
  flex: none;
  display: flex;
  align-items: center;
  padding-left: 4px;
  font-family: "Liberation Mono", monospace;
  font-size: 9.600px;
  color: #222;
}

.nav {
  width: 16.500px;
  height: 15px;
  padding: 2px 3px;
  border-right: 1px solid #bbb;
  flex: none;
}

.nav svg {
  display: block;
  width: 9px;
  height: 11px;
}

.slash {
  width: 8px;
  height: 16px;
  flex: none;
  fill: none;
  stroke: #222;
  margin: 0 2px;
}

.nav + .slash {
  margin: 0 0 0 -1px;
}

.ltab {
  margin: 0 6px 0 2px;
}

.ltab.active {
  font-size: 11px;
  font-weight: bold;
  color: #000;
  margin: 0 4px 0 1px;
}

.command {
  position: relative;
  height: 88px;
  flex: none;
  margin-top: 7px;
  display: flex;
  background-color: #fff;
  border-top: 2px solid #777;
}

.cmd-strip {
  width: 19px;
  flex: none;
  display: flex;
  flex-direction: column;
  align-items: center;
  gap: 9px;
  padding-top: 4px;
  background-color: #b8bcc6;
}

.cmd-strip svg {
  width: 10px;
  height: 10px;
}

.cmd-body {
  flex: 1;
  min-width: 0;
  display: flex;
  flex-direction: column;
  border-left: 1px solid #666;
  color: #000;
}

.cmd-log {
  height: 65px;
  padding: 1px 0 0 2px;
  font-size: 15px;
  line-height: 13.6px;
  border-bottom: 1px solid #555;
}

.cmd-input {
  padding-left: 2px;
  font-size: 17px;
  font-weight: bold;
  line-height: 20px;
}

.cmd-scroll {
  width: 12px;
  flex: none;
  display: flex;
  flex-direction: column;
  align-items: center;
  padding-top: 7px;
  background-color: #f2f2f2;
}

.cmd-scroll svg {
  width: 10px;
  height: 6px;
}

.thumb {
  width: 12px;
  height: 21px;
  margin: 13px 0 6px;
  background-color: #c9c9c9;
}

.watermark {
  position: absolute;
  left: 586px;
  top: -1px;
  width: 180px;
  height: 85px;
  display: flex;
  align-items: center;
  gap: 12px;
  padding-left: 14px;
  background-color: #1f2f55;
}

.wm-logo {
  width: 36px;
  height: 36px;
  flex: none;
}

.wm-name {
  font-size: 25px;
  font-weight: bold;
  line-height: 30px;
  letter-spacing: 1.500px;
  color: #c3c7d0;
  white-space: nowrap;
}

.wm-url {
  font-size: 9.500px;
  line-height: 12px;
  letter-spacing: 0.9px;
  color: #9ca3b3;
  white-space: nowrap;
}

/* status bar */
.status {
  height: 17px;
  flex: none;
  display: flex;
  align-items: flex-start;
  background: linear-gradient(#dcdfe3, #a8aeb6);
  color: #444;
  overflow: hidden;
  margin-left: -2px;
}

.status-msg {
  padding: 3px 0 0 7px;
  font-size: 12.600px;
  line-height: 18px;
  white-space: nowrap;
  width: 491px;
  flex: none;
}

.status-sep {
  height: 17px;
  flex: none;
  background-color: #e2e4e8;
}

.sep-coords {
  width: 7px;
}

.sep-gl {
  width: 2px;
}

.status-coords {
  width: 127px;
  padding: 3px 0 0 5px;
  font-size: 11px;
  flex: none;
}

.status-gl {
  padding: 2px 2px 0 2px;
  font-size: 12px;
  flex: none;
}

.status-scale {
  width: 20px;
  padding: 3px 0 0 3px;
  font-size: 12px;
  flex: none;
}

.st-ic {
  width: 14px;
  height: 16px;
  margin: 1px 3px 0;
  flex: none;
}

.st-ic.lit {
  width: 17px;
  background-color: #e9e24c;
}

.st-ic.grid {
  width: 18px;
}

.st-ic.ortho {
  margin-left: 0;
}

.st-ic.clock {
  width: 18px;
  height: 18px;
  margin-left: 5px;
}

/* drop-down menus */
.menu {
  position: absolute;
  display: flex;
  flex-direction: column;
  border: 1px solid #b4b7bd;
  background: linear-gradient(90deg, #e4e8f3 25px, #c7cbd3 25px, #c7cbd3 26px, #f9f9f9 26px);
  font-size: 13px;
  color: #555;
}

.menu-view {
  left: 116px;
  top: 23px;
  width: 181px;
}

.menu-toolbars {
  left: 297px;
  top: 394px;
  width: 221px;
  padding-bottom: 3px;
}

.mi {
  height: 22px;
  flex: none;
  display: flex;
  align-items: center;
  line-height: 22px;
}

.mi-ic {
  width: 25px;
  height: 22px;
  flex: none;
  display: flex;
  align-items: center;
  justify-content: center;
}

.mi-tx {
  flex: 1;
  padding-left: 5px;
  white-space: nowrap;
}

.mi-arrow {
  width: 0;
  height: 0;
  margin-right: 5px;
  border-style: solid;
  border-width: 4.5px 0 4.5px 6px;
  border-color: transparent transparent transparent #444;
}

.mi-key {
  padding-right: 13px;
  font-size: 11px;
}

.mi.hot {
  margin: 0 1px 2px;
  background: linear-gradient(#fdf7df, #fde6a0 50%, #fbd360 85%, #fde9aa);
  border: 1px solid #e8d8a4;
  width: 177px;
}

.mi.hot .mi-ic {
  width: 23px;
}

.msep {
  height: 8px;
  flex: none;
  margin: 0 2px 0 30px;
  background: linear-gradient(#c9c9c9, #c9c9c9) center / 100% 1px no-repeat;
}

.chk {
  width: 20px;
  height: 20px;
  display: flex;
  align-items: center;
  justify-content: center;
  background-color: #fdd98c;
  border: 1px solid #e3b36b;
  border-radius: 2px;
}

.chk .ic {
  width: 16px;
  height: 16px;
}

.arrows {
  position: absolute;
  left: -2px;
  top: 0;
  pointer-events: none;
}
```
